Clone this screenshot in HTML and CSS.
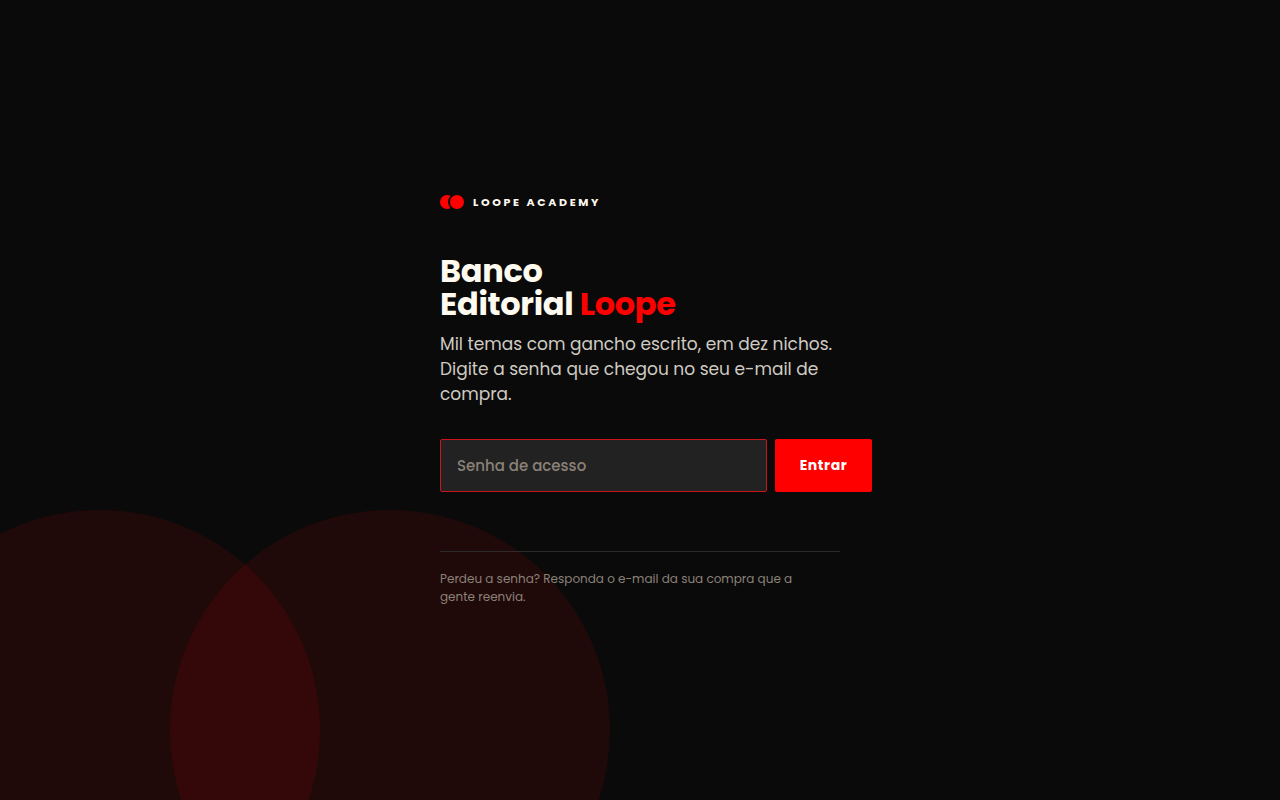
FILE: index.html
```
<!DOCTYPE html>
<html lang="pt-BR">
<head>
  <meta charset="UTF-8">
  <meta name="viewport" content="width=device-width, initial-scale=1">
  <title>Banco Editorial Loope</title>
  <link rel="stylesheet" href="styles.css">
</head>
<body>
  <div class="orbs">
    <div class="orb orb-left"></div>
    <div class="orb orb-right"></div>
  </div>

  <main class="gate">
    <div class="brand">
      <svg class="brand-mark" width="24" height="14" viewBox="0 0 24 14" aria-hidden="true">
        <circle cx="7" cy="7" r="7" fill="#ff0000"/>
        <circle cx="17" cy="7" r="9" fill="#0a0a0a"/>
        <circle cx="17" cy="7" r="7" fill="#ff0000"/>
      </svg>
      <span class="brand-name">LOOPE ACADEMY</span>
    </div>

    <h1>Banco<br>Editorial <span class="accent">Loope</span></h1>
    <p class="lead">Mil temas com gancho escrito, em dez nichos. Digite a senha que chegou no seu e-mail de compra.</p>

    <form class="access">
      <input type="password" id="senha" placeholder="Senha de acesso" aria-label="Senha de acesso" autocomplete="off">
      <button type="submit">Entrar</button>
    </form>

    <p class="help">Perdeu a senha? Responda o e-mail da sua compra que a gente reenvia.</p>
  </main>
</body>
</html>
```
FILE: styles.css
```
* {
  box-sizing: border-box;
  margin: 0;
  padding: 0;
}

body {
  min-height: 100vh;
  display: flex;
  align-items: center;
  justify-content: center;
  background: #0a0a0a;
  color: #fffaf0;
  font-family: Poppins, sans-serif;
}

/* background circles */
.orbs {
  position: absolute;
  inset: 0;
  overflow: hidden;
}
.orb {
  position: absolute;
  bottom: -150px;
  width: 440px;
  height: 440px;
  border-radius: 50%;
  background: #ff0000;
  opacity: 0.09;
}
.orb-left { left: -120px; }
.orb-right { left: 170px; }

.gate {
  position: relative;
  width: 100%;
  max-width: 400px;
}

.brand {
  display: flex;
  align-items: center;
  gap: 9px;
  margin-bottom: 44px;
}
.brand-name {
  font-size: 11px;
  line-height: 16px;
  font-weight: 700;
  letter-spacing: 0.24em;
}

h1 {
  margin-bottom: 12px;
  font-size: 32px;
  line-height: 33px;
  font-weight: 700;
  letter-spacing: -0.01em;
}
.accent { color: #ff0000; }

.lead {
  margin-bottom: 32px;
  font-size: 17px;
  line-height: 25px;
  color: #cfcbc2;
}

/* the row runs a little past the text column */
.access {
  display: flex;
  gap: 8px;
  width: 108%;
  margin-bottom: 59px;
}
.access input {
  flex: 1;
  min-width: 0;
  height: 53px;
  padding: 0 16px;
  border: 1px solid #c9151b;
  border-radius: 2px;
  background: #222222;
  color: #fffaf0;
  font: 500 15px Poppins, sans-serif;
  outline: none;
}
.access input::placeholder { color: #8a8178; }
.access button {
  width: 97px;
  border: 0;
  border-radius: 2px;
  background: #ff0000;
  color: #ffffff;
  font: 700 14px Poppins, sans-serif;
  letter-spacing: 0.04em;
  cursor: pointer;
}

.help {
  padding: 18px 16px 0 0;
  border-top: 1px solid #2e2a2a;
  font-size: 12px;
  line-height: 18px;
  color: #8a8178;
}
```
